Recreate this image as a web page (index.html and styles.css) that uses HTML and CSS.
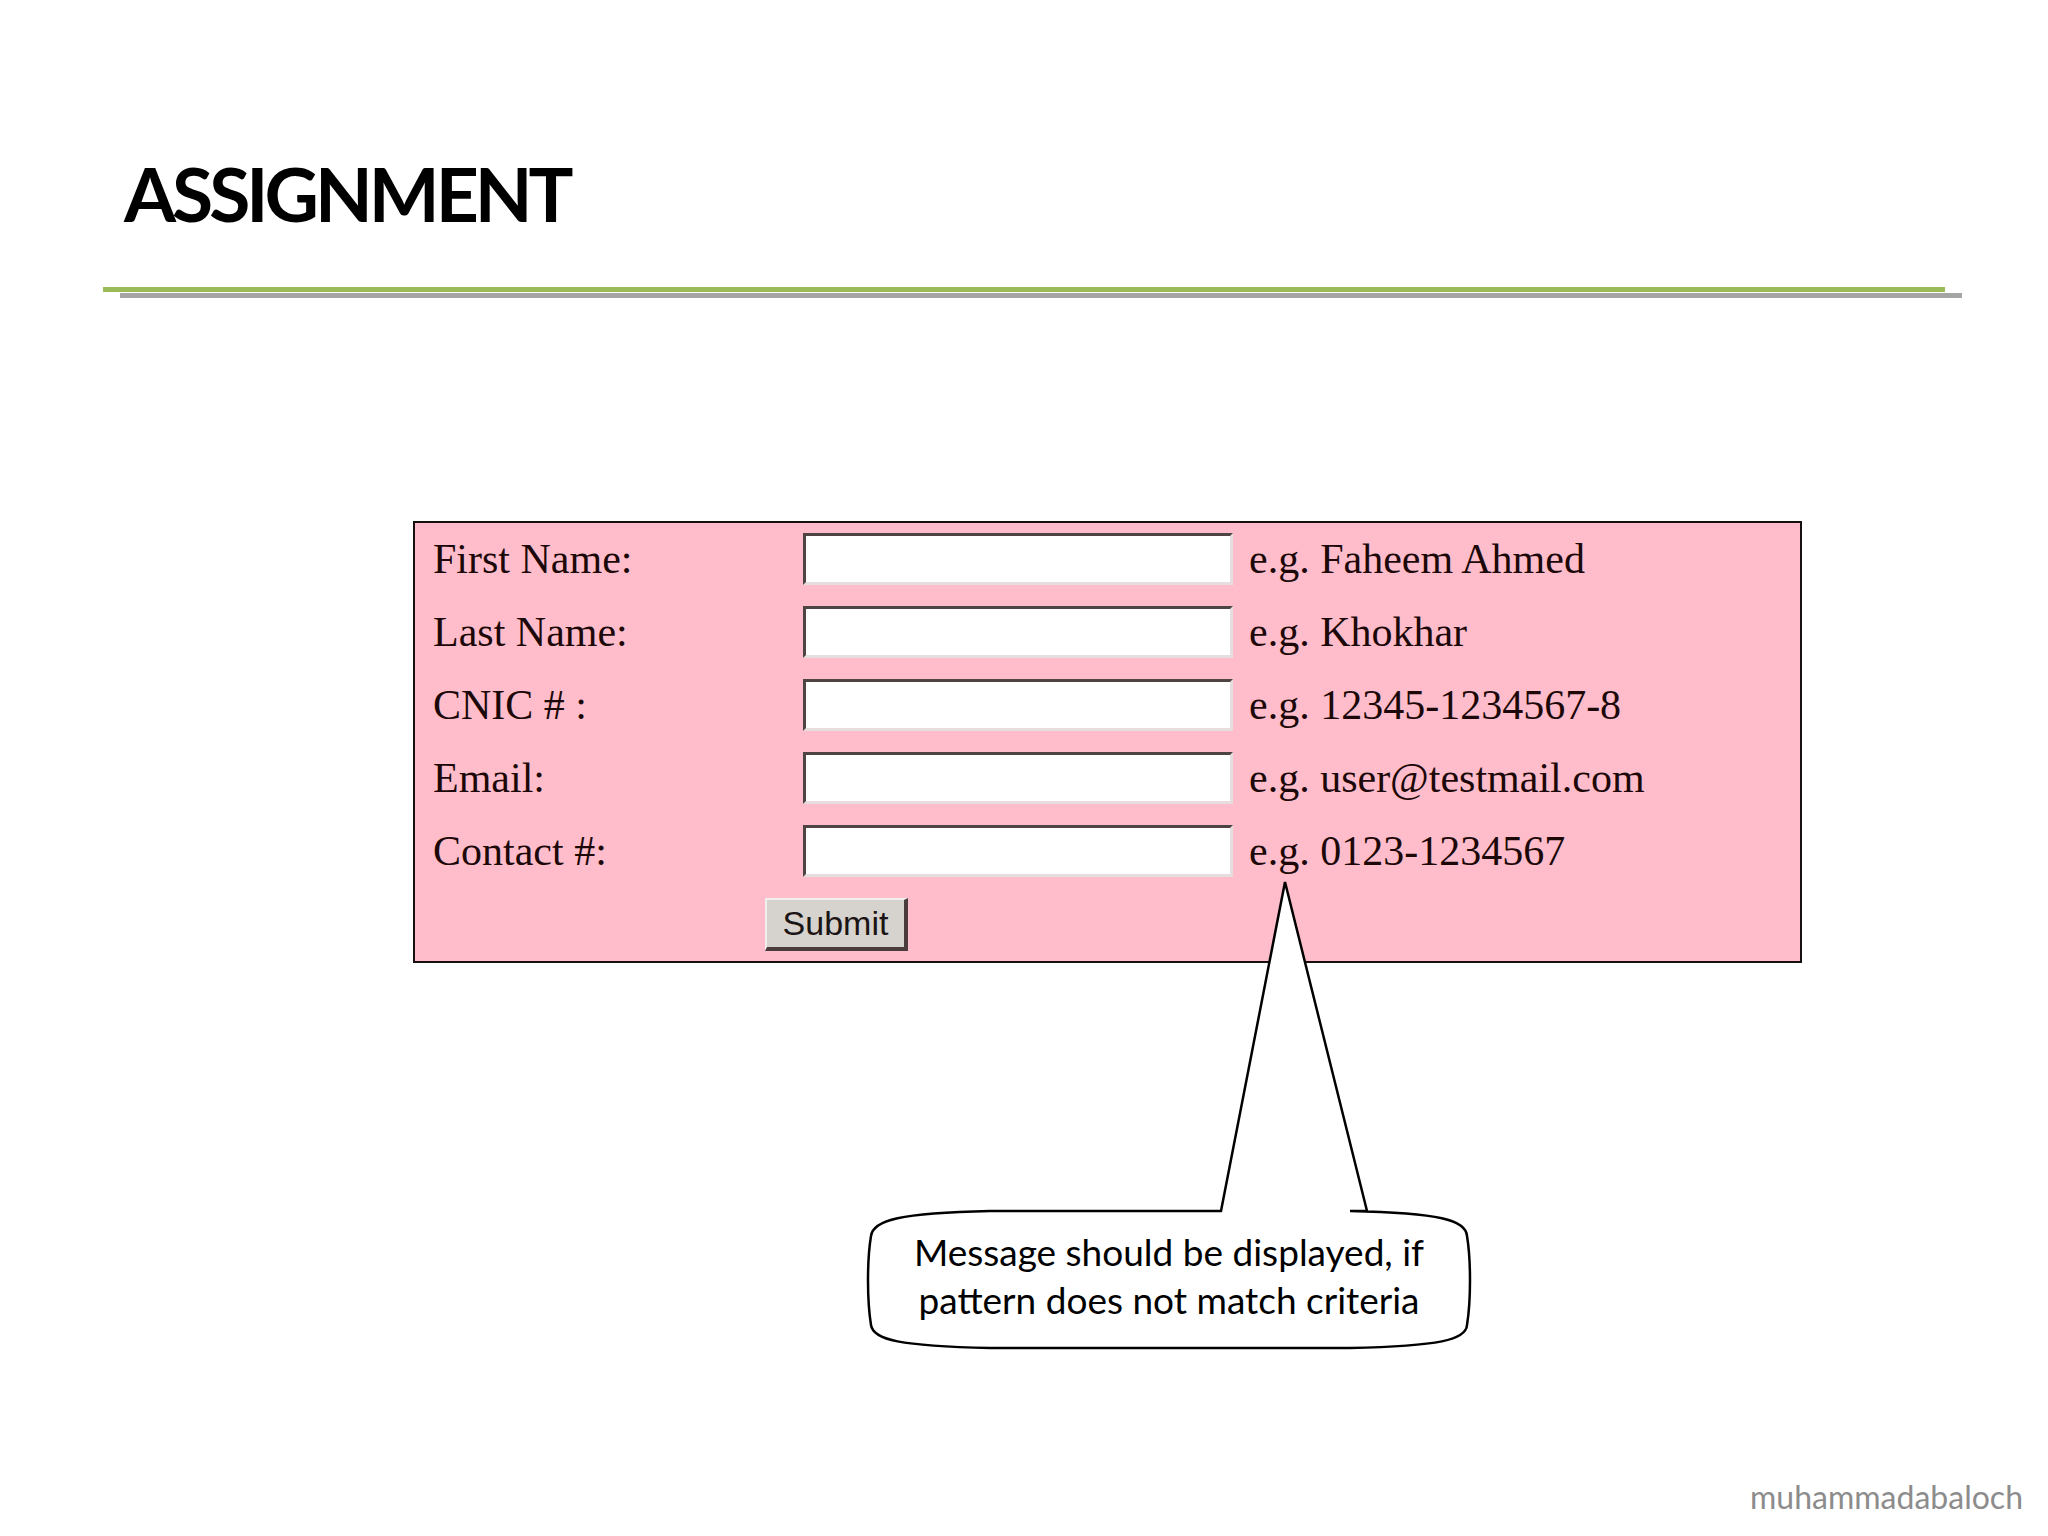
FILE: index.html
```html
<!DOCTYPE html>
<html lang="en">
<head>
<meta charset="utf-8">
<title>Assignment</title>
<link rel="stylesheet" href="styles.css">
</head>
<body>
<div class="slide">
  <header class="title-block">
    <h1 class="title">ASSIGNMENT</h1>
    <div class="rule"></div>
  </header>

  <form class="form-box" onsubmit="return false">
    <label class="label" for="fn">First Name:</label>
    <input class="field" id="fn" type="text">
    <span class="hint">e.g. Faheem Ahmed</span>

    <label class="label" for="ln">Last Name:</label>
    <input class="field" id="ln" type="text">
    <span class="hint">e.g. Khokhar</span>

    <label class="label" for="cnic">CNIC # :</label>
    <input class="field" id="cnic" type="text">
    <span class="hint">e.g. 12345-1234567-8</span>

    <label class="label" for="em">Email:</label>
    <input class="field" id="em" type="text">
    <span class="hint">e.g. user@testmail.com</span>

    <label class="label" for="ct">Contact #:</label>
    <input class="field" id="ct" type="text">
    <span class="hint">e.g. 0123-1234567</span>

    <button class="submit" type="submit">Submit</button>
  </form>

  <div class="callout">
    <svg class="callout-shape" width="620" height="490" viewBox="0 0 620 490" aria-hidden="true">
      <path d="M 130 341 L 361 341 L 425 12 L 507 341 L 490 341 C 580 343 606 350 607 366 C 611 390 611 430 607 455 C 606 470 580 476 490 478 L 130 478 C 40 476 13 470 11 455 C 7 430 7 390 11 366 C 13 350 40 343 130 341 Z"
            fill="#ffffff" stroke="#000000" stroke-width="2.5" stroke-linejoin="miter"/>
    </svg>
    <p class="callout-text">Message should be displayed, if<br>pattern does not match criteria</p>
  </div>

  <footer class="footer">muhammadabaloch</footer>
</div>
</body>
</html>
```

FILE: styles.css
```css
html, body {
  margin: 0;
  padding: 0;
  background: #ffffff;
}

.slide {
  position: relative;
  width: 2048px;
  height: 1536px;
  overflow: hidden;
  display: flex;
  flex-direction: column;
  background: #ffffff;
}

.title-block {
  display: flex;
  flex-direction: column;
}

.title {
  margin: 156px 0 0 124px;
  font-family: "Lato", "Open Sans", sans-serif;
  font-weight: 700;
  font-size: 75px;
  line-height: 75px;
  letter-spacing: -4px;
  color: #000000;
}

.rule {
  margin: 56px 0 0 103px;
  width: 1842px;
  height: 5px;
  background: #9bbb59;
  box-shadow: 17px 6px 0 #a5a5a5;
}

.form-box {
  margin: 229px 0 0 413px;
  width: 1389px;
  box-sizing: border-box;
  border: 2px solid #161010;
  background: #ffbdcb;
  padding: 10px 0 11px 18px;
  display: grid;
  grid-template-columns: 354px 430px 1fr;
  grid-auto-rows: 52px;
  column-gap: 16px;
  row-gap: 21px;
  align-items: center;
}

.label,
.hint {
  font-family: "Liberation Serif", "Times New Roman", serif;
  font-size: 42px;
  line-height: 48px;
  color: #1c0808;
  white-space: nowrap;
}

.field {
  width: 430px;
  height: 52px;
  box-sizing: border-box;
  margin: 0;
  padding: 0 6px;
  background: #ffffff;
  border-style: solid;
  border-width: 3px;
  border-color: #4e4444 #e6dede #e6dede #4e4444;
  font-family: "Liberation Sans", Arial, sans-serif;
  font-size: 30px;
  outline: none;
}

.submit {
  grid-column: 1 / -1;
  justify-self: start;
  margin: 0 0 0 332px;
  width: 143px;
  height: 53px;
  box-sizing: border-box;
  padding: 0;
  background: #d6d2cd;
  border-style: solid;
  border-width: 2px 4px 4px 2px;
  border-color: #f2f0ee #4a3c3c #4a3c3c #f2f0ee;
  font-family: "Liberation Sans", Arial, sans-serif;
  font-size: 34px;
  line-height: 44px;
  color: #1a1414;
}

.callout {
  position: absolute;
  left: 860px;
  top: 870px;
  width: 620px;
  height: 490px;
}

.callout-shape {
  position: absolute;
  left: 0;
  top: 0;
}

.callout-text {
  position: relative;
  margin: 0 0 0 9px;
  width: 600px;
  padding-top: 358px;
  text-align: center;
  font-family: "Lato", "Open Sans", sans-serif;
  font-size: 37px;
  line-height: 48px;
  color: #000000;
}

.footer {
  margin-top: auto;
  align-self: flex-end;
  padding: 0 25px 20px 0;
  font-family: "Lato", "Open Sans", sans-serif;
  font-size: 32px;
  line-height: 38px;
  color: #8c8c8c;
}
```
